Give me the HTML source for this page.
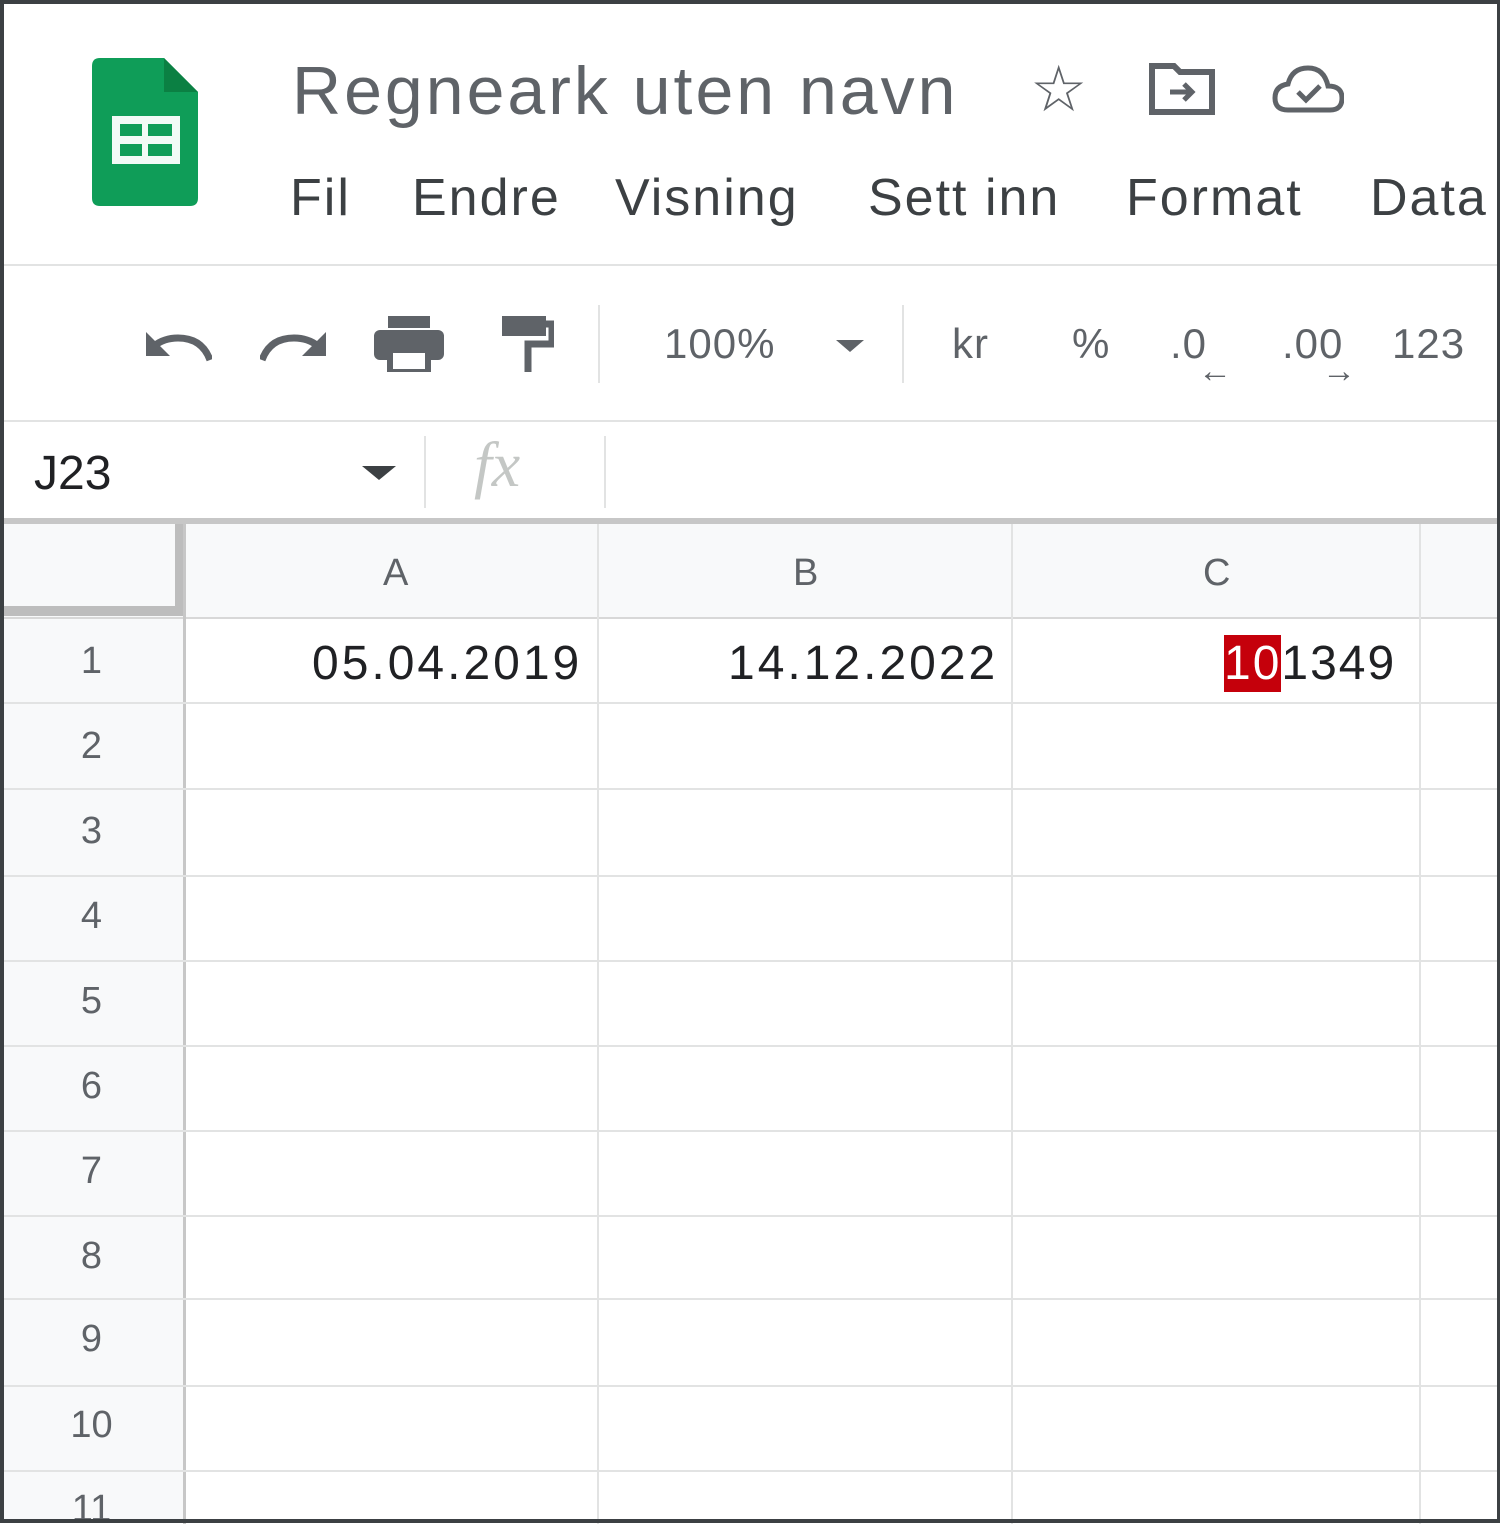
<!DOCTYPE html>
<html><head><style>
*{margin:0;padding:0;box-sizing:border-box}
body{width:1500px;height:1523px;overflow:hidden;background:#fff;font-family:"Liberation Sans",Arial,sans-serif;position:relative}
.frame{position:absolute;inset:0;border:4px solid #3c4043;border-right-width:3px;z-index:10;pointer-events:none}
.abs{position:absolute}
.menu span{position:absolute;top:168px;font-size:52px;color:#3c4043;letter-spacing:2px}
.tb{position:absolute;font-size:42px;color:#5f6368;letter-spacing:1px}
.hl{position:absolute;left:0;width:1500px;height:2px;background:#e2e3e3}
.vl{position:absolute;width:2px;background:#e2e3e3}
.rn{position:absolute;left:0;width:183px;text-align:center;font-size:38px;color:#5f6368}
.val{position:absolute;font-size:48px;color:#202124;letter-spacing:3px}
</style></head><body>
<div class="frame"></div>
<svg class="abs" style="left:92px;top:58px" width="108" height="148" viewBox="0 0 108 148">
<path d="M8 0H72L106 34V140Q106 148 98 148H8Q0 148 0 140V8Q0 0 8 0Z" fill="#0f9d58"/>
<path d="M72 0V34H106Z" fill="#0b8043"/>
<rect x="20" y="58" width="68" height="48" fill="#fff" opacity=".95"/>
<rect x="28" y="66" width="22" height="12" fill="#0f9d58"/><rect x="56" y="66" width="24" height="12" fill="#0f9d58"/>
<rect x="28" y="86" width="22" height="12" fill="#0f9d58"/><rect x="56" y="86" width="24" height="12" fill="#0f9d58"/>
</svg>
<div class="abs" style="left:292px;top:52px;font-size:68px;color:#5f6368;letter-spacing:3px">Regneark uten navn</div>
<div class="abs" style="left:1030px;top:52px;font-size:64px;color:#5f6368">☆</div>
<svg class="abs" style="left:1148px;top:62px" width="68" height="54" viewBox="0 0 68 54"><path d="M4 4H26L32 10H64V50H4Z" fill="none" stroke="#5f6368" stroke-width="6"/><path d="M22 30H44M36 22L44 30L36 38" fill="none" stroke="#5f6368" stroke-width="5"/></svg>
<svg class="abs" style="left:1272px;top:64px" width="72" height="50" viewBox="0 0 72 50"><path d="M16 46H58Q70 46 70 34Q70 22 56 22Q52 4 36 4Q20 4 16 20Q3 22 3 34Q3 46 16 46Z" fill="none" stroke="#5f6368" stroke-width="5"/><path d="M26 28L34 36L48 22" fill="none" stroke="#5f6368" stroke-width="5"/></svg>
<div class="menu"><span style="left:290px">Fil</span><span style="left:412px">Endre</span><span style="left:615px">Visning</span><span style="left:868px">Sett inn</span><span style="left:1126px">Format</span><span style="left:1370px">Data</span></div>
<div class="hl" style="top:264px"></div>
<svg class="abs" style="left:144px;top:326px" width="68" height="36" viewBox="0 0 68 36"><path d="M66 34Q58 12 34 12Q20 12 10 20" fill="none" stroke="#5f6368" stroke-width="7"/><path d="M2 6V30H26Z" fill="#5f6368"/></svg>
<svg class="abs" style="left:260px;top:326px" width="68" height="36" viewBox="0 0 68 36"><path d="M2 34Q10 12 34 12Q48 12 58 20" fill="none" stroke="#5f6368" stroke-width="7"/><path d="M66 6V30H42Z" fill="#5f6368"/></svg>
<svg class="abs" style="left:374px;top:316px" width="70" height="56" viewBox="0 0 70 56"><rect x="14" y="0" width="42" height="12" fill="#5f6368"/><rect x="0" y="14" width="70" height="30" rx="6" fill="#5f6368"/><rect x="16" y="34" width="38" height="22" fill="#fff" stroke="#5f6368" stroke-width="6"/></svg>
<svg class="abs" style="left:498px;top:314px" width="56" height="60" viewBox="0 0 56 60"><rect x="4" y="2" width="44" height="20" fill="#5f6368"/><path d="M48 10H54V30H30V58" fill="none" stroke="#5f6368" stroke-width="7"/></svg>
<div class="vl" style="left:598px;top:305px;height:78px"></div>
<div class="tb" style="left:664px;top:320px">100%</div>
<div class="abs" style="left:836px;top:340px;width:0;height:0;border-left:14px solid transparent;border-right:14px solid transparent;border-top:12px solid #5f6368"></div>
<div class="vl" style="left:902px;top:305px;height:78px"></div>
<div class="tb" style="left:952px;top:320px">kr</div>
<div class="tb" style="left:1072px;top:320px">%</div>
<div class="tb" style="left:1170px;top:320px">.0</div><div class="tb" style="left:1198px;top:352px;font-size:34px">←</div>
<div class="tb" style="left:1282px;top:320px">.00</div><div class="tb" style="left:1322px;top:352px;font-size:34px">→</div>
<div class="tb" style="left:1392px;top:320px">123</div>
<div class="hl" style="top:420px"></div>
<div class="abs" style="left:34px;top:446px;font-size:48px;color:#202124">J23</div>
<div class="abs" style="left:362px;top:466px;width:0;height:0;border-left:17px solid transparent;border-right:17px solid transparent;border-top:14px solid #3c4043"></div>
<div class="vl" style="left:424px;top:436px;height:72px"></div>
<div class="abs" style="left:474px;top:428px;font-size:64px;font-style:italic;color:#c4c7c5;font-family:'Liberation Serif',serif">fx</div>
<div class="vl" style="left:604px;top:436px;height:72px"></div>
<div class="abs" style="left:0;top:518px;width:1500px;height:6px;background:#c7c7c7"></div>
<div class="abs" style="left:0;top:524px;width:1500px;height:94px;background:#f8f9fa"></div>
<div class="abs" style="left:0;top:524px;height:82px;background:#f8f9fa;border-right:8px solid #bdbdbd;border-bottom:10px solid #bdbdbd;box-sizing:content-box;width:175px"></div>
<div class="abs" style="left:383px;top:552px;font-size:38px;color:#5f6368">A</div>
<div class="abs" style="left:793px;top:552px;font-size:38px;color:#5f6368">B</div>
<div class="abs" style="left:1203px;top:552px;font-size:38px;color:#5f6368">C</div>
<div class="abs" style="left:0;top:618px;width:183px;height:905px;background:#f8f9fa"></div>
<div class="hl" style="top:617px;background:#d8d8d8"></div>
<div class="vl" style="left:183px;top:524px;height:1000px;background:#c7c7c7;width:3px"></div>
<div class="vl" style="left:597px;top:524px;height:1000px"></div>
<div class="vl" style="left:1011px;top:524px;height:1000px"></div>
<div class="vl" style="left:1419px;top:524px;height:1000px"></div>
<div class="hl" style="top:702px"></div><div class="hl" style="top:788px"></div><div class="hl" style="top:875px"></div><div class="hl" style="top:960px"></div><div class="hl" style="top:1045px"></div><div class="hl" style="top:1130px"></div><div class="hl" style="top:1215px"></div><div class="hl" style="top:1298px"></div><div class="hl" style="top:1385px"></div><div class="hl" style="top:1470px"></div>
<div class="rn" style="top:640px">1</div><div class="rn" style="top:725px">2</div><div class="rn" style="top:810px">3</div><div class="rn" style="top:895px">4</div><div class="rn" style="top:980px">5</div><div class="rn" style="top:1065px">6</div><div class="rn" style="top:1150px">7</div><div class="rn" style="top:1235px">8</div><div class="rn" style="top:1318px">9</div><div class="rn" style="top:1404px">10</div><div class="rn" style="top:1488px">11</div>
<div class="val" style="left:312px;top:636px">05.04.2019</div>
<div class="val" style="left:728px;top:636px">14.12.2022</div>
<div class="val" style="left:1224px;top:636px;letter-spacing:2px"><span style="background:#c5000b;color:#fff;padding:2px 0">10</span>1349</div>
</body></html>
